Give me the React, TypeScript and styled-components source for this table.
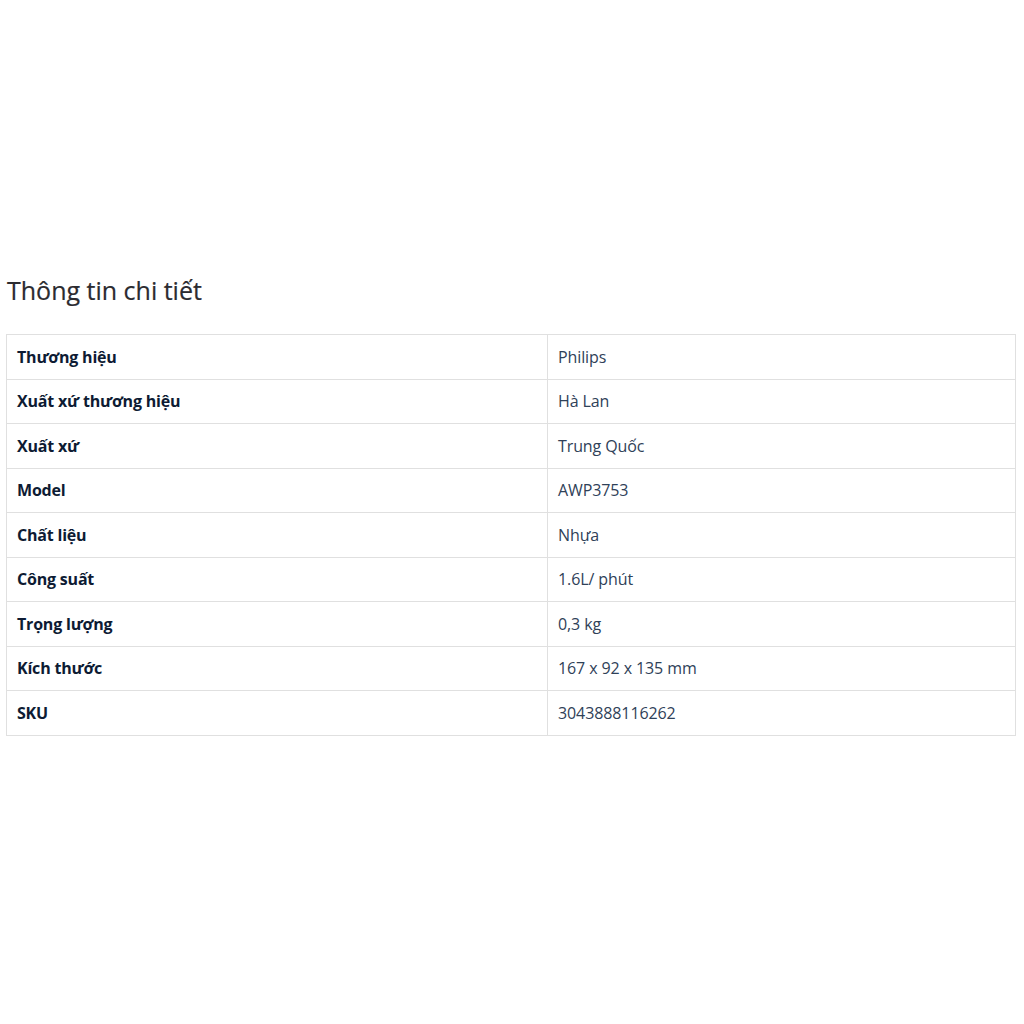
import React from "react";
import styled, { createGlobalStyle } from "styled-components";

const Global = createGlobalStyle`
  html, body { margin: 0; padding: 0; background: #ffffff; }
  body { font-family: "Open Sans", "Noto Sans", sans-serif; }
`;

const Page = styled.div`
  padding: 271px 8px 0 6px;
`;

const Title = styled.h2`
  margin: 0 0 25px 1px;
  font-size: 25px;
  line-height: 38px;
  font-weight: 500;
  color: #2b2b30;
  -webkit-text-stroke: 0.2px #2b2b30;
`;

const Table = styled.table`
  width: 1010px;
  border-collapse: collapse;
  border: 1px solid #e0e0e0;
`;

const Cell = styled.td<{ $label?: boolean }>`
  border: 1px solid #e0e0e0;
  height: 44.5px;
  padding: 0 10px;
  box-sizing: border-box;
  vertical-align: middle;
  font-size: 16px;
  line-height: 22px;
  width: ${(p) => (p.$label ? "541px" : "auto")};
  font-weight: ${(p) => (p.$label ? 700 : 400)};
  color: ${(p) => (p.$label ? "#0d1b33" : "#2f4158")};
  letter-spacing: ${(p) => (p.$label ? "-0.2px" : "-0.1px")};
`;

const rows: [string, string][] = [
  ["Thương hiệu", "Philips"],
  ["Xuất xứ thương hiệu", "Hà Lan"],
  ["Xuất xứ", "Trung Quốc"],
  ["Model", "AWP3753"],
  ["Chất liệu", "Nhựa"],
  ["Công suất", "1.6L/ phút"],
  ["Trọng lượng", "0,3 kg"],
  ["Kích thước", "167 x 92 x 135 mm"],
  ["SKU", "3043888116262"],
];

export default function App() {
  return (
    <>
      <Global />
      <Page>
        <Title>Thông tin chi tiết</Title>
        <Table>
          <tbody>
            {rows.map(([k, v]) => (
              <tr key={k}>
                <Cell $label>{k}</Cell>
                <Cell>{v}</Cell>
              </tr>
            ))}
          </tbody>
        </Table>
      </Page>
    </>
  );
}
